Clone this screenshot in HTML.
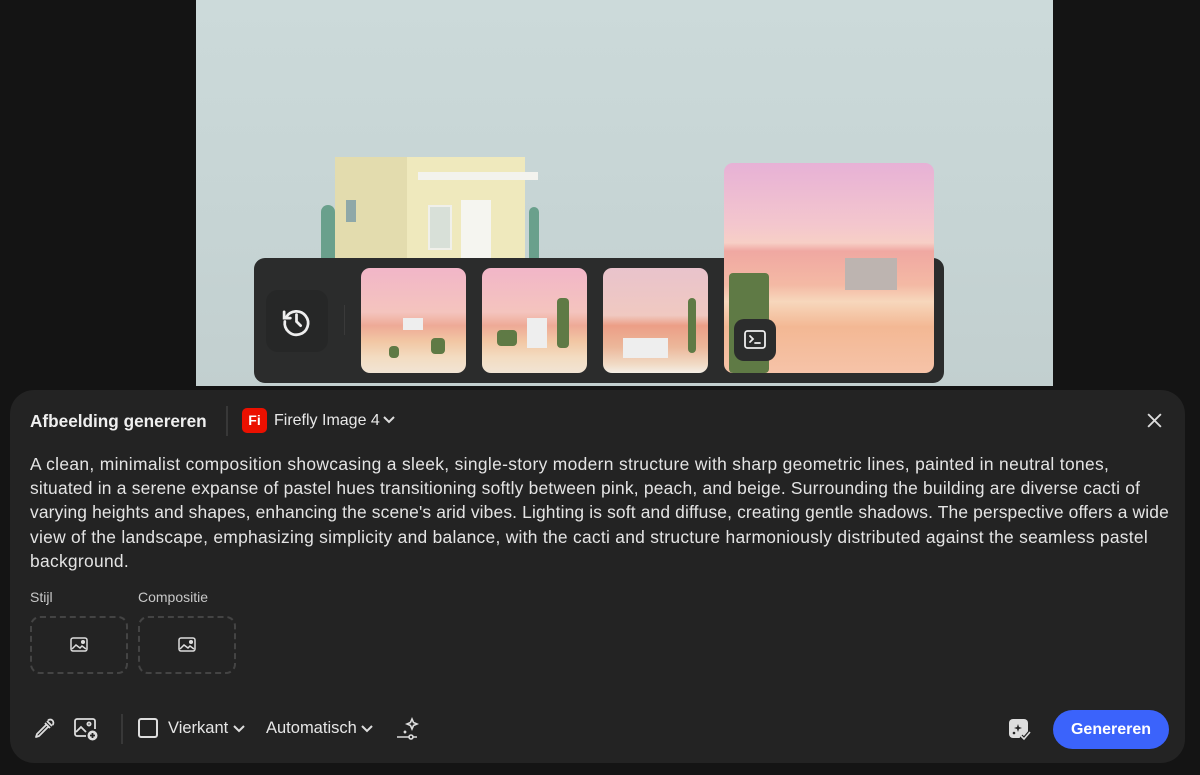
<!DOCTYPE html><html><head><style>
*{margin:0;padding:0;box-sizing:border-box}
body{width:1200px;height:775px;background:#141414;position:relative;overflow:hidden;font-family:"Liberation Sans",sans-serif;color:#e6e6e6}
.abs{position:absolute}
.canvas{left:196px;top:0;width:857px;height:386px;background:linear-gradient(180deg,#ccdada 0%,#c6d4d4 60%,#c2cfcf 100%)}
.thumb{position:absolute;border-radius:9px;overflow:hidden;background:linear-gradient(180deg,#f2b6c8 0%,#f4c4be 42%,#eeaa96 55%,#f2c7a4 70%,#f3dcc1 85%,#f1e4d4 100%)}
.panel{left:10px;top:390px;width:1175px;height:373px;background:#232323;border-radius:24px}
.txt{left:30px;top:452px;width:1160px;font-size:17.4px;line-height:24.2px;color:#e4e4e4;letter-spacing:0.3px;white-space:nowrap}
.lbl{font-size:14px;color:#c8c8c8}
.drop{width:98px;height:58px;border:2px dashed #444;border-radius:10px}
.cac{position:absolute;background:#5f7a45;border-radius:4px}
</style></head><body>
<div class="abs canvas">
 <div class="abs" style="left:139px;top:157px;width:72px;height:110px;background:#e3dcae"></div>
 <div class="abs" style="left:211px;top:157px;width:118px;height:110px;background:#efe9bd"></div>
 <div class="abs" style="left:222px;top:172px;width:120px;height:8px;background:#f3f3ee"></div>
 <div class="abs" style="left:232px;top:205px;width:24px;height:45px;background:#d8e0d8;border:2px solid #f0f0ea"></div>
 <div class="abs" style="left:265px;top:200px;width:30px;height:67px;background:#f5f5f0"></div>
 <div class="abs" style="left:150px;top:200px;width:10px;height:22px;background:#8fa8a8"></div>
 <div class="abs" style="left:125px;top:205px;width:14px;height:60px;background:#6aa08c;border-radius:7px"></div>
 <div class="abs" style="left:333px;top:207px;width:10px;height:60px;background:#6aa08c;border-radius:5px"></div>
</div>
<div class="abs" style="left:254px;top:258px;width:690px;height:125px;background:#2b2c2c;border-radius:11px"></div>
<div class="abs" style="left:266px;top:290px;width:62px;height:62px;background:#262727;border-radius:12px"></div>
<svg class="abs" style="left:280px;top:305px" width="33" height="33" viewBox="0 0 24 24" fill="none" stroke="#eee" stroke-width="2" stroke-linecap="round"><path d="M4.5 9A8.5 8.5 0 1 1 3.5 12"/><path d="M3 5v4.5h4.5"/><path d="M12 7v5l3 3"/></svg>
<div class="abs" style="left:344px;top:305px;width:1px;height:30px;background:#3a3a3a"></div>
<div class="thumb" style="left:361px;top:268px;width:105px;height:105px"><div class="abs" style="left:42px;top:50px;width:20px;height:12px;background:#eee"></div><div class="cac" style="left:70px;top:70px;width:14px;height:16px"></div><div class="cac" style="left:28px;top:78px;width:10px;height:12px"></div></div>
<div class="thumb" style="left:482px;top:268px;width:105px;height:105px"><div class="abs" style="left:45px;top:50px;width:20px;height:30px;background:#eee"></div><div class="cac" style="left:75px;top:30px;width:12px;height:50px"></div><div class="cac" style="left:15px;top:62px;width:20px;height:16px"></div></div>
<div class="thumb" style="left:603px;top:268px;width:105px;height:105px;background:linear-gradient(180deg,#e9c3cc 0%,#f0c9c1 45%,#ec9e86 55%,#ecb79a 75%,#f1dbc6 92%,#f4efe6 100%)"><div class="abs" style="left:20px;top:70px;width:45px;height:20px;background:#eee"></div><div class="cac" style="left:85px;top:30px;width:8px;height:55px"></div></div>
<div class="thumb" style="left:724px;top:163px;width:210px;height:210px;background:linear-gradient(180deg,#e7b1d6 0%,#f4c7cd 30%,#f7cfc6 38%,#f0a8a2 42%,#f4b9a4 58%,#f7d7bc 66%,#f3b894 78%,#f6c3a8 100%)"><div class="cac" style="left:5px;top:110px;width:40px;height:100px"></div></div>
<div class="abs" style="left:845px;top:258px;width:52px;height:32px;background:#bdb4b0"></div>
<div class="abs" style="left:734px;top:319px;width:42px;height:42px;background:#2b2c2c;border-radius:10px"></div>
<svg class="abs" style="left:743px;top:329px" width="24" height="22" viewBox="0 0 24 22" fill="none" stroke="#eee" stroke-width="1.8"><rect x="2" y="2" width="20" height="17" rx="2.5"/><path d="M7 7l3 3-3 3M12 14h5" stroke-linecap="round"/></svg>
<div class="abs panel"></div>
<div class="abs" style="left:30px;top:411px;font-size:17.2px;font-weight:bold;color:#efefef">Afbeelding genereren</div>
<div class="abs" style="left:226px;top:406px;width:2px;height:30px;background:#383838"></div>
<div class="abs" style="left:242px;top:408px;width:25px;height:25px;background:#eb1000;border-radius:5px;color:#fff;font-weight:bold;font-size:14px;text-align:center;line-height:25px">Fi</div>
<div class="abs" style="left:274px;top:412px;font-size:16px;color:#e8e8e8">Firefly Image 4</div>
<svg class="abs" style="left:382px;top:414px" width="14" height="12" viewBox="0 0 14 12" fill="none" stroke="#ddd" stroke-width="2"><path d="M2 3l5 5 5-5"/></svg>
<svg class="abs" style="left:1146px;top:412px" width="17" height="17" viewBox="0 0 16 16" stroke="#ddd" stroke-width="1.8"><path d="M2 2l12 12M14 2L2 14"/></svg>
<div class="abs txt"><span style="letter-spacing:0.34px">A clean, minimalist composition showcasing a sleek, single-story modern structure with sharp geometric lines, painted in neutral tones,</span><br><span style="letter-spacing:0.22px">situated in a serene expanse of pastel hues transitioning softly between pink, peach, and beige. Surrounding the building are diverse cacti of</span><br><span style="letter-spacing:0.15px">varying heights and shapes, enhancing the scene's arid vibes. Lighting is soft and diffuse, creating gentle shadows. The perspective offers a wide</span><br><span style="letter-spacing:0.28px">view of the landscape, emphasizing simplicity and balance, with the cacti and structure harmoniously distributed against the seamless pastel</span><br>background.</div>
<div class="abs lbl" style="left:30px;top:589px">Stijl</div>
<div class="abs lbl" style="left:138px;top:589px">Compositie</div>
<div class="abs drop" style="left:30px;top:616px"></div>
<div class="abs drop" style="left:138px;top:616px"></div>
<svg class="abs" style="left:70px;top:637px" width="18" height="15" viewBox="0 0 18 15" fill="none" stroke="#ddd" stroke-width="1.5"><rect x="1" y="1" width="16" height="13" rx="2"/><path d="M2 12l4-4 4 3 2-2 4 3"/><circle cx="13" cy="5" r="1.3" fill="#ddd"/></svg>
<svg class="abs" style="left:178px;top:637px" width="18" height="15" viewBox="0 0 18 15" fill="none" stroke="#ddd" stroke-width="1.5"><rect x="1" y="1" width="16" height="13" rx="2"/><path d="M2 12l4-4 4 3 2-2 4 3"/><circle cx="13" cy="5" r="1.3" fill="#ddd"/></svg>
<svg class="abs" style="left:32px;top:717px" width="24" height="24" viewBox="0 0 24 24" fill="none" stroke="#ddd" stroke-width="1.8" stroke-linejoin="round"><path d="M15 4l5 5M13 6l5 5M14.5 7.5L5 17l-1 3 3-1 9.5-9.5"/><path d="M16 3.5a2.5 2.5 0 0 1 4.5 4.5"/></svg>
<svg class="abs" style="left:73px;top:716px" width="27" height="26" viewBox="0 0 27 26" fill="none" stroke="#ddd" stroke-width="1.8"><path d="M13 20H4a2 2 0 0 1-2-2V5a2 2 0 0 1 2-2h16a2 2 0 0 1 2 2v8"/><path d="M3 16l5-5 5 5"/><circle cx="16" cy="8" r="1.6"/><circle cx="19.5" cy="19.5" r="5" fill="#ddd" stroke="none"/><path d="M19.5 17v5M17 19.5h5" stroke="#232323"/></svg>
<div class="abs" style="left:121px;top:714px;width:2px;height:30px;background:#383838"></div>
<div class="abs" style="left:138px;top:718px;width:20px;height:20px;border:2px solid #ddd;border-radius:3px"></div>
<div class="abs" style="left:168px;top:719px;font-size:16.5px;color:#e6e6e6">Vierkant</div>
<svg class="abs" style="left:232px;top:723px" width="14" height="12" viewBox="0 0 14 12" fill="none" stroke="#ddd" stroke-width="2"><path d="M2 3l5 5 5-5"/></svg>
<div class="abs" style="left:266px;top:719px;font-size:16.5px;color:#e6e6e6">Automatisch</div>
<svg class="abs" style="left:360px;top:723px" width="14" height="12" viewBox="0 0 14 12" fill="none" stroke="#ddd" stroke-width="2"><path d="M2 3l5 5 5-5"/></svg>
<svg class="abs" style="left:395px;top:716px" width="27" height="27" viewBox="0 0 27 27" fill="none" stroke="#ddd" stroke-width="1.6"><path d="M17 3l1.5 3.5L22 8l-3.5 1.5L17 13l-1.5-3.5L12 8l3.5-1.5z"/><path d="M2 21h20"/><circle cx="16" cy="21" r="2" fill="#232323"/><path d="M9 15l2 2M11 15l-2 2"/></svg>
<svg class="abs" style="left:1008px;top:718px" width="24" height="24" viewBox="0 0 24 24"><rect x="1" y="1" width="19" height="19" rx="4" fill="#ddd"/><path d="M10 6l1 3 3 1-3 1-1 3-1-3-3-1 3-1z" fill="#232323"/><circle cx="6" cy="15" r="1.3" fill="#232323"/><path d="M13 18l3 3 6-7" fill="none" stroke="#232323" stroke-width="4"/><path d="M13 18l3 3 6-7" fill="none" stroke="#ddd" stroke-width="1.6"/></svg>
<div class="abs" style="left:1053px;top:710px;width:116px;height:39px;background:#3b63fb;border-radius:20px;color:#fff;font-weight:bold;font-size:16px;text-align:center;line-height:39px">Genereren</div>
</body></html>
